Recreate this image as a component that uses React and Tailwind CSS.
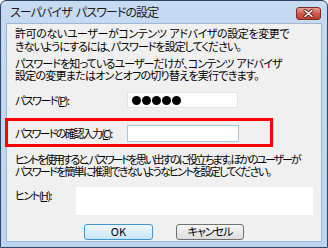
const font = { fontFamily: '"Noto Sans CJK JP", "Noto Sans", sans-serif' };

const Dots = () => (
    <div className="flex gap-[1px] pl-[4px]">
        {[0, 1, 2, 3, 4].map((i) => (
            <span key={i} className="w-[9px] h-[9px] rounded-full bg-black" />
        ))}
    </div>
);

const App = () => {
    return (
        <div
            className="w-[328px] h-[248px] flex flex-col border border-[#2c4766] rounded-t-[6px] bg-gradient-to-b from-[#c6dbf2] to-[#bed4ee] text-[11px] text-black [font-feature-settings:'palt'] overflow-hidden"
            style={font}
        >
            {/* title bar */}
            <div className="h-[22px] shrink-0 flex items-center justify-between pl-[9px] pr-[6px]">
                <span className="text-[12px] leading-none text-[#1a1a1a] tracking-[-0.9px]">
                    スーパバイザ<span className="ml-[4px]">パスワードの設定</span>
                </span>
                <button className="w-[25px] h-[13px] mt-[2px] flex items-center justify-center rounded-[3px] border border-[#7a2b22] bg-gradient-to-b from-[#e8a093] via-[#cf5c4c] to-[#c0402e]">
                    <svg width="11" height="9" viewBox="0 0 11 9">
                        <path d="M2 1.5 L9 7.5 M9 1.5 L2 7.5" stroke="#5a1a12" strokeWidth="3" strokeLinecap="round" />
                        <path d="M2 1.5 L9 7.5 M9 1.5 L2 7.5" stroke="#ffffff" strokeWidth="1.6" strokeLinecap="round" />
                    </svg>
                </button>
            </div>

            {/* content panel */}
            <div className="relative flex-1 mx-[5px] mb-[5px] border border-[#9fb6d2] bg-[#f0f0f0] pt-[3px] px-[8px] whitespace-nowrap">
                <div className="leading-[13px]">
                    <div className="tracking-[-0.4px]">
                        許可のないユーザーがコンテンツ<span className="ml-[3px]">アドバイザの設定を変更で</span>
                    </div>
                    <div className="tracking-[-1px]">きないようにするには、パスワードを設定してください。</div>
                </div>
                <div className="mt-[4px] leading-[12px]">
                    <div className="tracking-[-0.9px]">
                        パスワードを知っているユーザーだけが、コンテンツ<span className="ml-[3px]">アドバイザ</span>
                    </div>
                    <div className="tracking-[-0.75px]">設定の変更またはオンとオフの切り替えを実行できます。</div>
                </div>

                <div className="mt-[11px] flex items-center">
                    <span className="w-[112px] tracking-[-1.5px]">パスワード(<u>P</u>):</span>
                    <div className="w-[111px] h-[16px] flex items-center bg-white border border-[#e2e6ea]">
                        <Dots />
                    </div>
                </div>

                <div className="mt-[16px] flex items-center">
                    <span className="w-[112px] tracking-[-1.8px]">パスワードの確認入力(<u>C</u>):</span>
                    <div className="w-[112px] h-[17px] bg-white border border-[#a9c6e2]" />
                </div>

                <div className="mt-[11px] leading-[12px]">
                    <div className="tracking-[-2.1px]">ヒントを使用すると、パスワードを思い出すのに役立ちます。ほかのユーザーが</div>
                    <div className="tracking-[-1.7px]">パスワードを簡単に推測できないようなヒントを設定してください。</div>
                </div>

                <div className="mt-[10px] flex items-start">
                    <span className="w-[61px] tracking-[-1.5px]">ヒント(<u>H</u>):</span>
                    <div className="w-[237px] h-[28px] bg-white" />
                </div>

                <div className="mt-[9px] flex justify-center gap-[23px]">
                    <button className="w-[69px] h-[16px] rounded-[3px] border border-[#3d95d6] bg-gradient-to-b from-[#eef7fc] to-[#c9e5f6] text-[11px] leading-none">
                        OK
                    </button>
                    <button className="w-[68px] h-[16px] rounded-[3px] border border-[#707070] bg-gradient-to-b from-[#f6f6f6] to-[#dcdcdc] text-[11px] leading-none tracking-[-1px]">
                        キャンセル
                    </button>
                </div>

                {/* annotation */}
                <div className="absolute left-[-2px] top-[94px] w-[268px] h-[29px] border-[3px] border-[#ff0000]" />
            </div>
        </div>
    );
};

export default App;
